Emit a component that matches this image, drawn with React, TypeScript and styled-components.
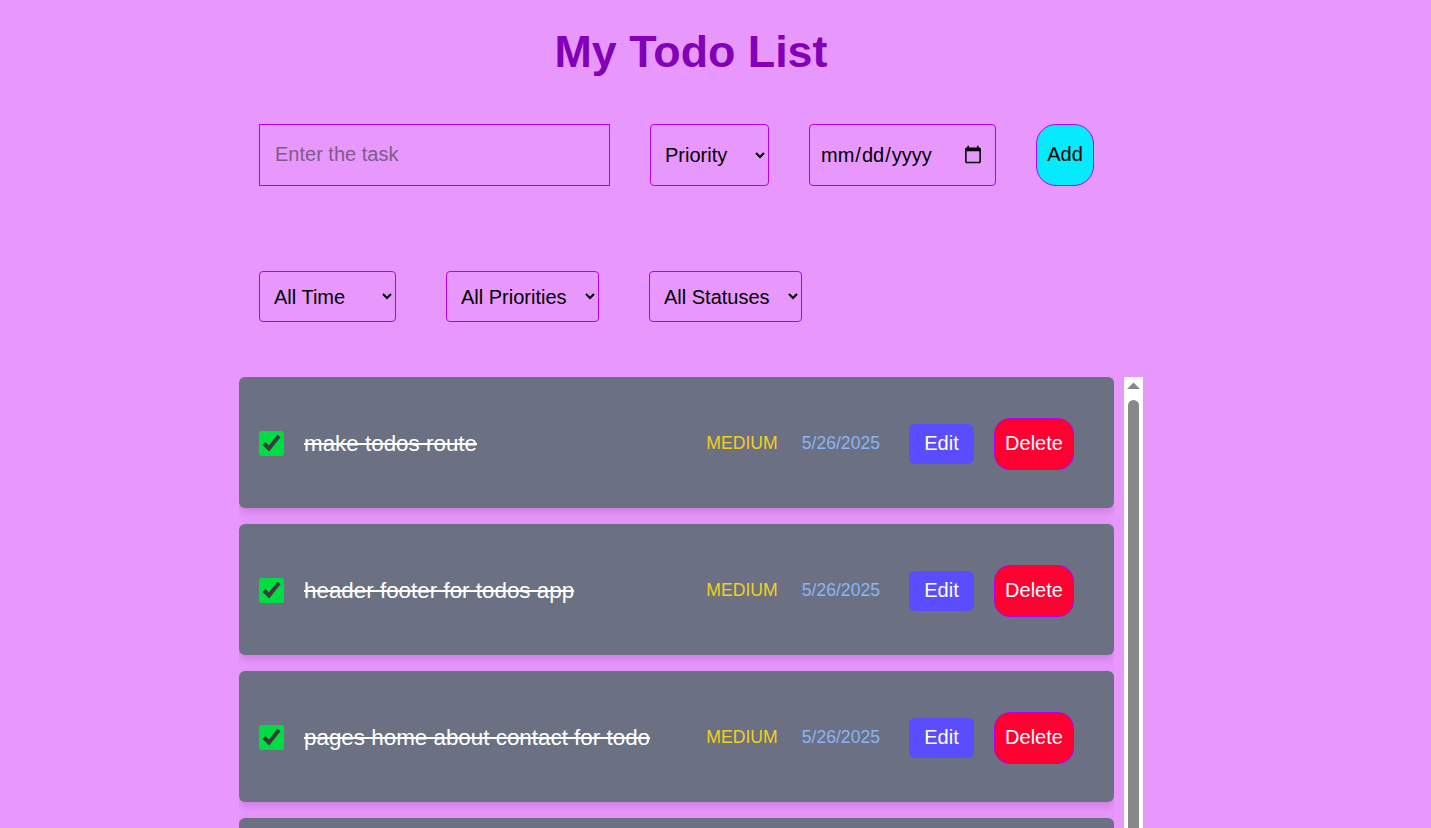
import { createGlobalStyle } from "styled-components";
import styled from "styled-components";

type Todo = {
  id: number;
  text: string;
  priority: string;
  date: string;
  done: boolean;
};

const todos: Todo[] = [
  { id: 1, text: "make todos route", priority: "medium", date: "5/26/2025", done: true },
  { id: 2, text: "header footer for todos app", priority: "medium", date: "5/26/2025", done: true },
  { id: 3, text: "pages home about contact for todo", priority: "medium", date: "5/26/2025", done: true },
  { id: 4, text: "add filters for todos", priority: "medium", date: "5/26/2025", done: true },
];

function App() {
  return (
    <>
      <GlobalStyle />
      <Wrapper>
        <Title>My Todo List</Title>
        <FormRow>
          <TaskInput placeholder="Enter the task" />
          <Select defaultValue="" $w={119}>
            <option value="">Priority</option>
            <option value="low">Low</option>
            <option value="medium">Medium</option>
            <option value="high">High</option>
          </Select>
          <DateInput type="date" />
          <AddButton>Add</AddButton>
        </FormRow>
        <FilterRow>
          <Select defaultValue="all" $w={137} $h={51}>
            <option value="all">All Time</option>
            <option value="today">Today</option>
            <option value="week">This Week</option>
          </Select>
          <Select defaultValue="all" $w={153} $h={51}>
            <option value="all">All Priorities</option>
            <option value="low">Low</option>
            <option value="medium">Medium</option>
            <option value="high">High</option>
          </Select>
          <Select defaultValue="all" $w={153} $h={51}>
            <option value="all">All Statuses</option>
            <option value="done">Completed</option>
            <option value="open">Pending</option>
          </Select>
        </FilterRow>
        <ListFrame>
          <List>
            {todos.map((t) => (
              <Card key={t.id}>
                <Check type="checkbox" defaultChecked={t.done} />
                <TaskText $done={t.done}>{t.text}</TaskText>
                <Priority>{t.priority}</Priority>
                <DateText>{t.date}</DateText>
                <EditButton>Edit</EditButton>
                <DeleteButton>Delete</DeleteButton>
              </Card>
            ))}
          </List>
          <ScrollTrack>
            <svg width="19" height="20" viewBox="0 0 19 20">
              <path d="M3 12 L9.5 5.5 L16 12 Z" fill="#888" />
            </svg>
            <ScrollThumb />
          </ScrollTrack>
        </ListFrame>
      </Wrapper>
    </>
  );
}

const GlobalStyle = createGlobalStyle`
  html, body {
    margin: 0;
    padding: 0;
    background: #e898fc;
    font-family: "Liberation Sans", Arial, sans-serif;
    overflow: hidden;
  }
`;

const Wrapper = styled.div`
  width: 904px;
  margin-left: 239px;
`;

const Title = styled.h1`
  margin: 0;
  padding-top: 25px;
  text-align: center;
  font-size: 44.8px;
  line-height: 52px;
  font-weight: 700;
  color: #8300b9;
`;

const FormRow = styled.div`
  display: flex;
  align-items: center;
  gap: 40px;
  padding-left: 20px;
  margin-top: 47px;
`;

const fieldBase = `
  box-sizing: border-box;
  background: transparent;
  border: 1px solid #b400f0;
  font-family: "Liberation Sans", Arial, sans-serif;
  font-size: 20px;
  color: #000;
  outline: none;
`;

const TaskInput = styled.input`
  ${fieldBase}
  width: 351px;
  height: 62px;
  padding: 0 15px 2px;
  border-radius: 0;
  &::placeholder {
    color: #7d5a8a;
  }
`;

const Select = styled.select<{ $w: number; $h?: number }>`
  ${fieldBase}
  width: ${(p) => p.$w}px;
  height: ${(p) => p.$h ?? 62}px;
  padding: 0 10px;
  border-radius: 4px;
`;

const DateInput = styled.input`
  ${fieldBase}
  width: 187px;
  height: 62px;
  padding: 0 10px;
  border-radius: 4px;
`;

const AddButton = styled.button`
  box-sizing: border-box;
  width: 58px;
  height: 62px;
  background: #05eafc;
  border: 1px solid #b400f0;
  border-radius: 20px;
  font-family: "Liberation Sans", Arial, sans-serif;
  font-size: 20px;
  color: #000;
  padding: 0 0 2px;
  cursor: pointer;
`;

const FilterRow = styled.div`
  display: flex;
  align-items: center;
  gap: 50px;
  padding-left: 20px;
  margin-top: 85px;
`;

const ListFrame = styled.div`
  margin-top: 55px;
  height: 451px;
  display: flex;
  gap: 10px;
`;

const List = styled.div`
  flex: 1;
  overflow: hidden;
  display: flex;
  flex-direction: column;
  gap: 16px;
  padding-bottom: 12px;
`;

const ScrollTrack = styled.div`
  width: 19px;
  flex-shrink: 0;
  background: #fff;
  display: flex;
  flex-direction: column;
  align-items: center;

  svg {
    display: block;
    flex-shrink: 0;
  }
`;

const ScrollThumb = styled.div`
  flex: 1;
  width: 11px;
  margin-top: 3px;
  background: #888;
  border-radius: 6px 6px 0 0;
`;

const Card = styled.div`
  flex-shrink: 0;
  box-sizing: border-box;
  height: 131px;
  display: flex;
  align-items: center;
  padding: 2px 40px 0 20px;
  background: #6b7082;
  border-radius: 6px;
  box-shadow: 0 4px 10px rgba(120, 40, 140, 0.25);
`;

const Check = styled.input`
  width: 25px;
  height: 25px;
  margin: 0 20px 0 0;
  accent-color: #00dd44;
`;

const TaskText = styled.span<{ $done: boolean }>`
  flex: 1;
  font-size: 22.4px;
  color: #fff;
  text-decoration: ${(p) => (p.$done ? "line-through" : "none")};
`;

const Priority = styled.span`
  font-size: 17.6px;
  color: #f2cf1d;
  text-transform: uppercase;
  margin-right: 24px;
`;

const DateText = styled.span`
  font-size: 17.6px;
  color: #8ab4f8;
  margin-right: 29px;
`;

const EditButton = styled.button`
  box-sizing: border-box;
  width: 65px;
  height: 40px;
  background: #5a4cff;
  color: #fff;
  border: none;
  border-radius: 6px;
  font-family: "Liberation Sans", Arial, sans-serif;
  font-size: 20px;
  padding: 0;
  margin-right: 20px;
  cursor: pointer;
`;

const DeleteButton = styled.button`
  box-sizing: border-box;
  width: 80px;
  height: 52px;
  background: #ff0030;
  color: #fff;
  border: 1px solid #b400f0;
  border-radius: 16px;
  font-family: "Liberation Sans", Arial, sans-serif;
  font-size: 20px;
  padding: 0;
  cursor: pointer;
`;

export default App;
